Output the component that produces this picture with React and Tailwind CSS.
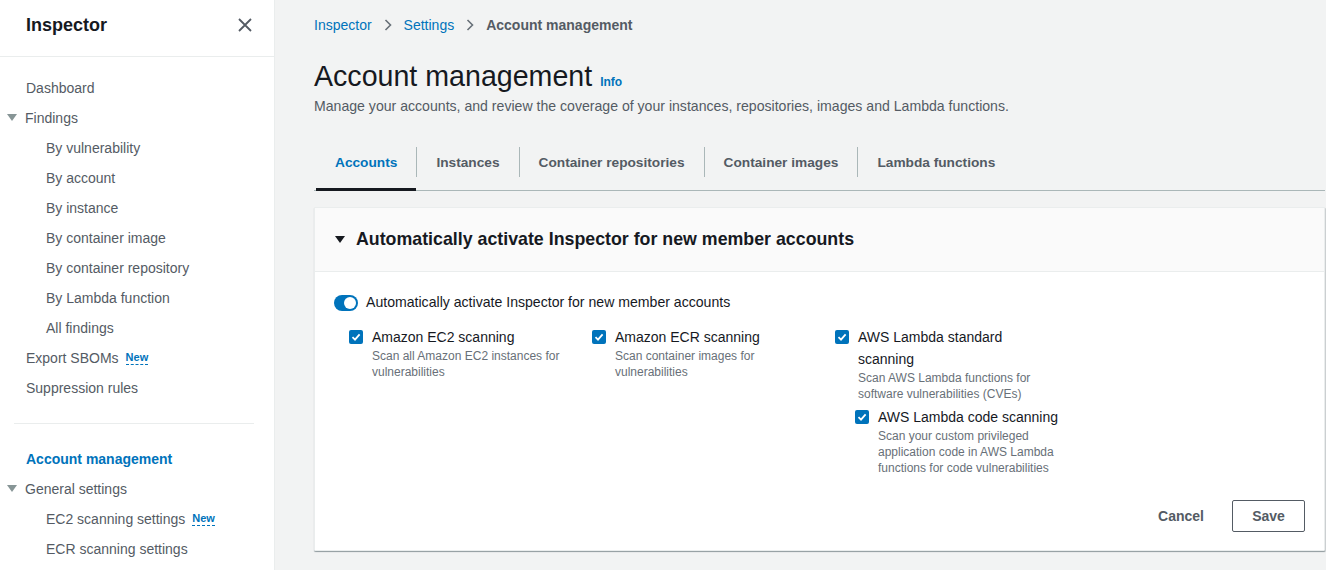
import React from 'react';

const font = { fontFamily: '"Liberation Sans", Arial, sans-serif' };

function NewBadge() {
  return (
    <span className="ml-[7px] text-[11px] font-bold text-[#0073bb] border-b border-dashed border-[#0073bb] leading-[13px]">New</span>
  );
}

function Caret({ className = '' }) {
  return (
    <svg width="10" height="8" viewBox="0 0 10 8" className={className}>
      <path d="M0 0 L10 0 L5 7 Z" fill="currentColor" />
    </svg>
  );
}

function NavItem({ children, sub, caret, active, badge }) {
  return (
    <div className={`h-[30px] flex items-center text-[14px] ${sub ? 'pl-[46px]' : caret ? 'pl-[7px]' : 'pl-[26px]'} ${active ? 'text-[#0073bb] font-bold' : 'text-[#545b64]'}`}>
      {caret && <Caret className="text-[#879596] mr-[8px]" />}
      <span>{children}</span>
      {badge && <NewBadge />}
    </div>
  );
}

function Checkbox() {
  return (
    <span className="w-[14px] h-[14px] rounded-[2px] bg-[#0073bb] flex items-center justify-center shrink-0">
      <svg width="10" height="10" viewBox="0 0 10 10">
        <path d="M1.5 5.2 L4 7.6 L8.6 2.4" stroke="white" strokeWidth="1.8" fill="none" />
      </svg>
    </span>
  );
}

function Option({ title, desc, className = '' }) {
  return (
    <div className={`flex items-start gap-[9px] ${className}`}>
      <div className="pt-[4px]"><Checkbox /></div>
      <div>
        <div className="text-[14px] leading-[22px] text-[#16191f]">{title}</div>
        <div className="text-[12px] leading-[16px] text-[#687078]">{desc}</div>
      </div>
    </div>
  );
}

export default function App() {
  const tabs = ['Accounts', 'Instances', 'Container repositories', 'Container images', 'Lambda functions'];
  return (
    <div className="flex w-[1326px] h-[570px] overflow-hidden bg-[#f2f3f3]" style={font}>
      {/* Sidebar */}
      <aside className="w-[275px] shrink-0 bg-white border-r border-[#eaeded] h-full">
        <div className="h-[57px] border-b border-[#eaeded] flex items-start justify-between pl-[26px] pr-[22px] pt-[14px]">
          <span className="text-[18px] leading-[22px] font-bold text-[#16191f]">Inspector</span>
          <svg width="14" height="14" viewBox="0 0 14 14" className="mt-[4px]">
            <path d="M1 1 L13 13 M13 1 L1 13" stroke="#545b64" strokeWidth="1.8" />
          </svg>
        </div>
        <nav className="pt-[16px]">
          <NavItem>Dashboard</NavItem>
          <NavItem caret>Findings</NavItem>
          <NavItem sub>By vulnerability</NavItem>
          <NavItem sub>By account</NavItem>
          <NavItem sub>By instance</NavItem>
          <NavItem sub>By container image</NavItem>
          <NavItem sub>By container repository</NavItem>
          <NavItem sub>By Lambda function</NavItem>
          <NavItem sub>All findings</NavItem>
          <NavItem badge>Export SBOMs</NavItem>
          <NavItem>Suppression rules</NavItem>
          <div className="ml-[14px] mr-[20px] my-[20px] border-t border-[#eaeded]" />
          <NavItem active>Account management</NavItem>
          <NavItem caret>General settings</NavItem>
          <NavItem sub badge>EC2 scanning settings</NavItem>
          <NavItem sub>ECR scanning settings</NavItem>
        </nav>
      </aside>

      {/* Main */}
      <main className="flex-1 pl-[39px] pr-[1px]">
        <div className="h-[50px] flex items-center gap-[12px] text-[14px]">
          <span className="text-[#0073bb]">Inspector</span>
          <svg width="8" height="12" viewBox="0 0 8 12"><path d="M1.5 1 L6.5 6 L1.5 11" stroke="#687078" strokeWidth="1.6" fill="none" /></svg>
          <span className="text-[#0073bb]">Settings</span>
          <svg width="8" height="12" viewBox="0 0 8 12"><path d="M1.5 1 L6.5 6 L1.5 11" stroke="#687078" strokeWidth="1.6" fill="none" /></svg>
          <span className="text-[#545b64] font-bold">Account management</span>
        </div>
        <div className="flex items-baseline gap-[8px] mt-[8px]">
          <h1 className="text-[28.6px] leading-[36px] text-[#16191f]">Account management</h1>
          <span className="text-[12px] font-bold text-[#0073bb]">Info</span>
        </div>
        <p className="text-[14.1px] leading-[20px] text-[#545b64] mt-[2px]">
          Manage your accounts, and review the coverage of your instances, repositories, images and Lambda functions.
        </p>

        {/* Tabs */}
        <div className="mt-[18px] flex border-b border-[#aab7b8] h-[57px]">
          {tabs.map((t, i) => (
            <div key={t} className={`relative flex items-center ${i === 0 ? 'ml-[2px]' : ''}`}>
              {i > 0 && <span className="w-px h-[30px] bg-[#aab7b8]" />}
              <div className={`relative px-[19px] pt-[2px] text-[13.7px] font-bold h-full flex items-center ${i === 0 ? 'text-[#0073bb]' : 'text-[#545b64]'}`}>
                {t}
                {i === 0 && <span className="absolute left-0 right-0 bottom-[-1px] h-[3px] bg-[#16191f]" />}
              </div>
            </div>
          ))}
        </div>

        {/* Card */}
        <div className="mt-[16px] bg-white border border-[#eaeded] shadow-[0_1px_1px_0_rgba(0,28,36,0.3),1px_1px_1px_0_rgba(0,28,36,0.15)] rounded-[1px]">
          <div className="h-[64px] bg-[#fafafa] border-b border-[#eaeded] flex items-center pl-[20px]">
            <Caret className="text-[#16191f] mr-[11px]" />
            <span className="text-[17.8px] font-bold text-[#16191f]">Automatically activate Inspector for new member accounts</span>
          </div>
          <div className="px-[19px] pt-[20px] pb-[18px]">
            <div className="flex items-center gap-[8px]">
              <span className="w-[24px] h-[16px] rounded-full bg-[#0073bb] relative shrink-0">
                <span className="absolute right-[2px] top-[2px] w-[12px] h-[12px] rounded-full bg-white" />
              </span>
              <span className="text-[14.1px] text-[#16191f]">Automatically activate Inspector for new member accounts</span>
            </div>
            <div className="flex pl-[15px] mt-[13px]">
              <Option className="w-[243px]" title="Amazon EC2 scanning" desc={<>Scan all Amazon EC2 instances for<br />vulnerabilities</>} />
              <Option className="w-[243px]" title="Amazon ECR scanning" desc={<>Scan container images for<br />vulnerabilities</>} />
              <div>
                <Option title={<>AWS Lambda standard<br />scanning</>} desc={<>Scan AWS Lambda functions for<br />software vulnerabilities (CVEs)</>} />
                <Option className="ml-[20px] mt-[4px]" title="AWS Lambda code scanning" desc={<>Scan your custom privileged<br />application code in AWS Lambda<br />functions for code vulnerabilities</>} />
              </div>
            </div>
            <div className="flex justify-end items-center gap-[28px] mt-[24px]">
              <span className="text-[14px] font-bold text-[#545b64]">Cancel</span>
              <span className="h-[32px] w-[73px] border border-[#545b64] rounded-[2px] flex items-center justify-center text-[14px] font-bold text-[#545b64]">Save</span>
            </div>
          </div>
        </div>
      </main>
    </div>
  );
}
